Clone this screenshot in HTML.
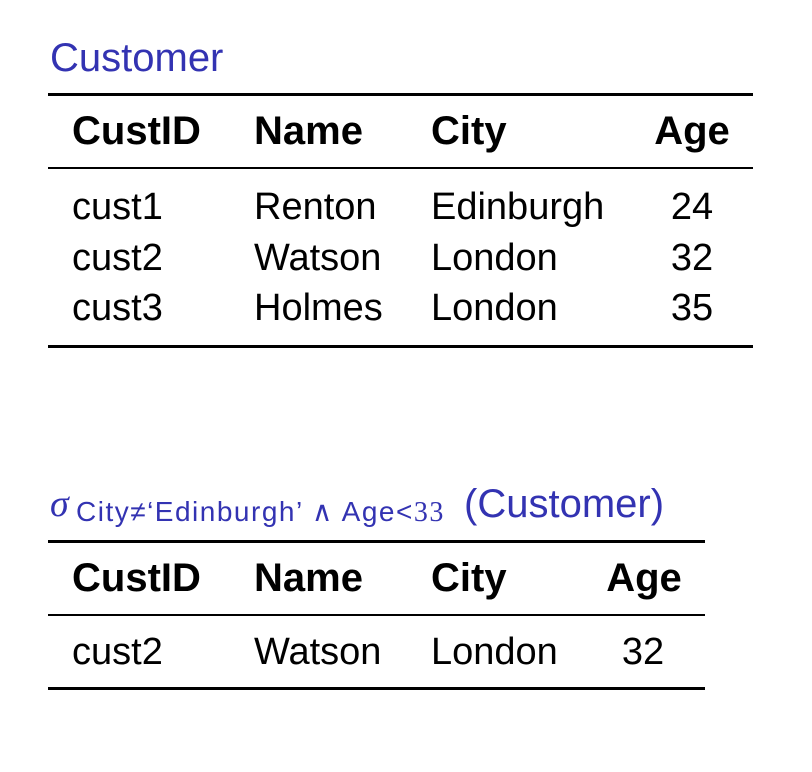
<!DOCTYPE html>
<html><head><meta charset="utf-8"><style>
body{margin:0;width:812px;height:772px;background:#fff;position:relative;overflow:hidden;font-family:"Liberation Sans",sans-serif;color:#000}
.t{position:absolute;white-space:nowrap;line-height:40px;font-size:38px}
.b{font-weight:bold;font-size:40px}
.c{text-align:center;width:100px}
.l{position:absolute;background:#000}
.blue{color:#3333b2}
</style></head><body>
<div class="t blue" style="left:50px;top:38px;font-size:40px">Customer</div>
<div class="l" style="left:48px;top:93px;width:705px;height:3px"></div>
<div class="t b" style="left:72px;top:111px">CustID</div>
<div class="t b" style="left:254px;top:111px">Name</div>
<div class="t b" style="left:431px;top:111px">City</div>
<div class="t b c" style="left:642px;top:111px">Age</div>
<div class="l" style="left:48px;top:167px;width:705px;height:2px"></div>
<div class="t" style="left:72px;top:187px">cust1</div>
<div class="t" style="left:254px;top:187px">Renton</div>
<div class="t" style="left:431px;top:187px">Edinburgh</div>
<div class="t c" style="left:642px;top:187px">24</div>
<div class="t" style="left:72px;top:238px">cust2</div>
<div class="t" style="left:254px;top:238px">Watson</div>
<div class="t" style="left:431px;top:238px">London</div>
<div class="t c" style="left:642px;top:238px">32</div>
<div class="t" style="left:72px;top:288px">cust3</div>
<div class="t" style="left:254px;top:288px">Holmes</div>
<div class="t" style="left:431px;top:288px">London</div>
<div class="t c" style="left:642px;top:288px">35</div>
<div class="l" style="left:48px;top:345px;width:705px;height:3px"></div>

<div class="t blue" style="left:50px;top:484px;font-family:'Liberation Serif',serif;font-style:italic;font-size:38px">σ</div>
<div class="t blue" style="left:76px;top:497px;font-size:28px;line-height:30px;letter-spacing:1.5px">City≠‘Edinburgh’ ∧ Age&lt;<span style="font-family:'Liberation Serif',serif">33</span></div>
<div class="t blue" style="left:464px;top:484px;font-size:40px">(Customer)</div>
<div class="l" style="left:48px;top:540px;width:657px;height:3px"></div>
<div class="t b" style="left:72px;top:558px">CustID</div>
<div class="t b" style="left:254px;top:558px">Name</div>
<div class="t b" style="left:431px;top:558px">City</div>
<div class="t b c" style="left:594px;top:558px">Age</div>
<div class="l" style="left:48px;top:614px;width:657px;height:2px"></div>
<div class="t" style="left:72px;top:632px">cust2</div>
<div class="t" style="left:254px;top:632px">Watson</div>
<div class="t" style="left:431px;top:632px">London</div>
<div class="t c" style="left:593px;top:632px">32</div>
<div class="l" style="left:48px;top:687px;width:657px;height:3px"></div>
</body></html>
